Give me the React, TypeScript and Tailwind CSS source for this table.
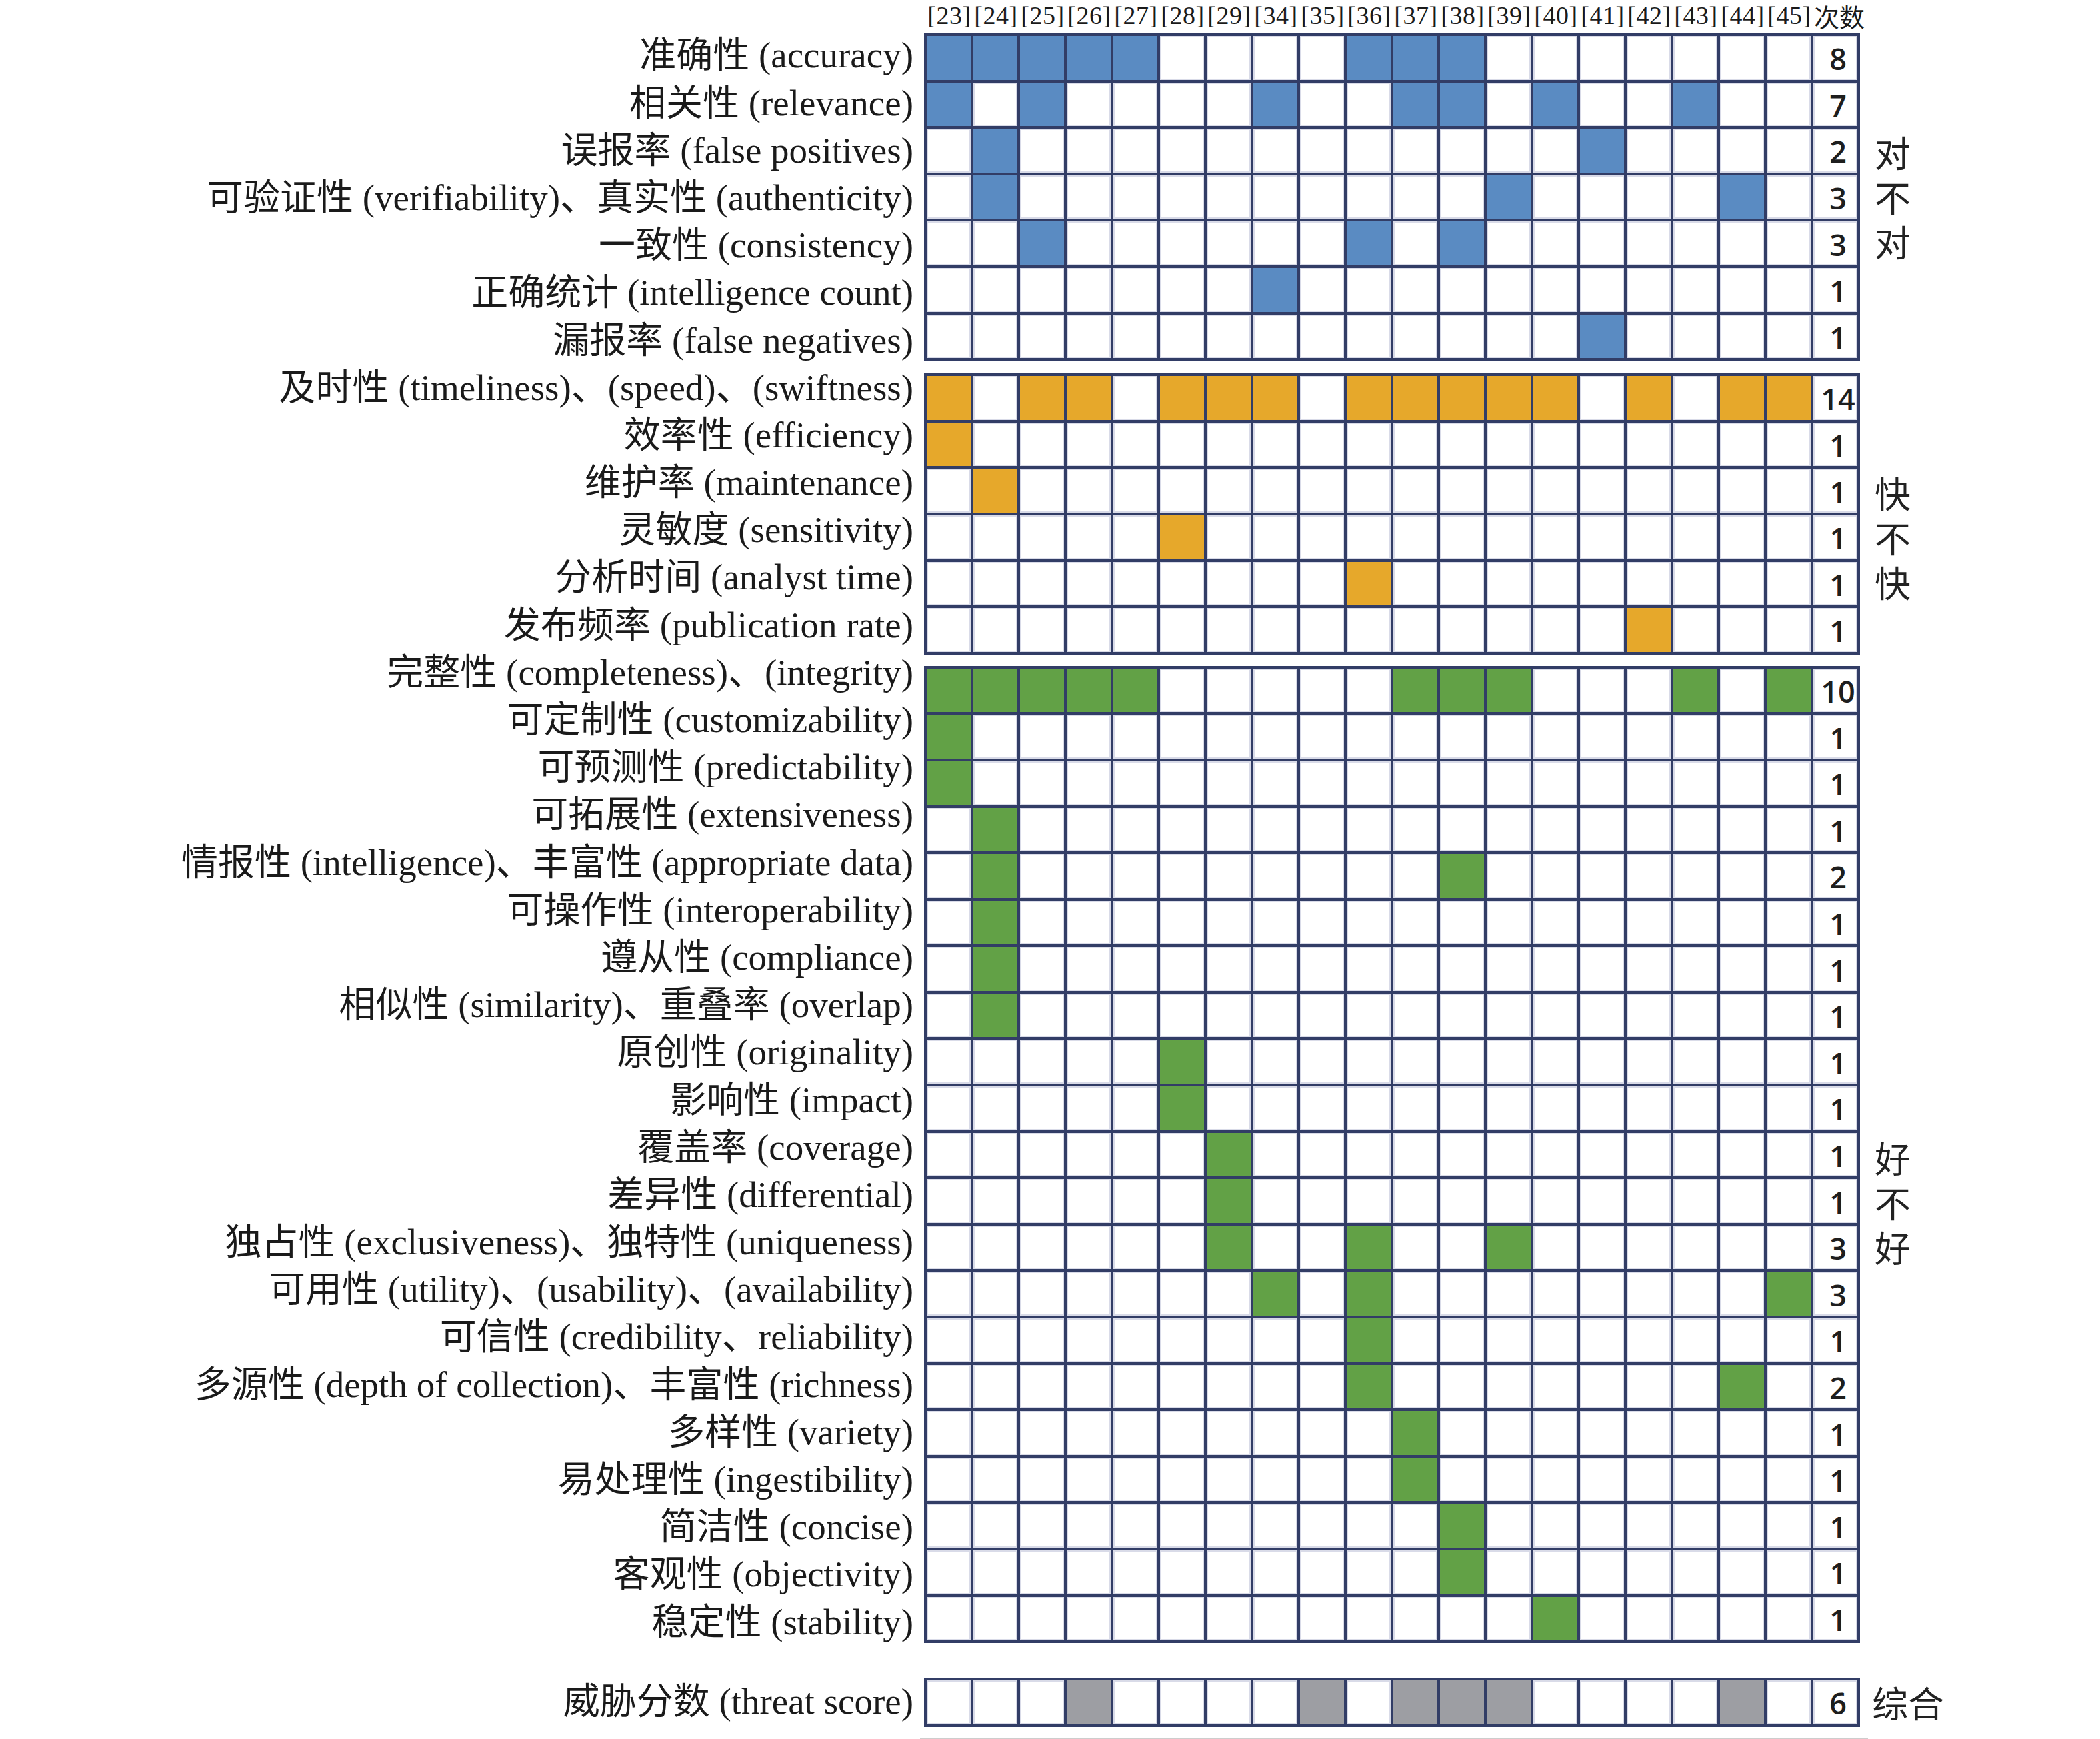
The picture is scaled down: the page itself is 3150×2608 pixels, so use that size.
import React from "react";

type Row = { fill: number[]; count: number };
type Block = { color: string; rows: Row[] };

const refs = ["23", "24", "25", "26", "27", "28", "29", "34", "35", "36", "37", "38", "39", "40", "41", "42", "43", "44", "45"];

const r = (fill: number[], count: number): Row => ({ fill, count });

const blue: Block = {
  color: "bg-[#5a8bc2]",
  rows: [
    r([0, 1, 2, 3, 4, 9, 10, 11], 8),
    r([0, 2, 7, 10, 11, 13, 16], 7),
    r([1, 14], 2),
    r([1, 12, 17], 3),
    r([2, 9, 11], 3),
    r([7], 1),
    r([14], 1),
  ],
};

const orange: Block = {
  color: "bg-[#e6a82b]",
  rows: [
    r([0, 2, 3, 5, 6, 7, 9, 10, 11, 12, 13, 15, 17, 18], 14),
    r([0], 1),
    r([1], 1),
    r([5], 1),
    r([9], 1),
    r([15], 1),
  ],
};

const green: Block = {
  color: "bg-[#62a146]",
  rows: [
    r([0, 1, 2, 3, 4, 10, 11, 12, 16, 18], 10),
    r([0], 1),
    r([0], 1),
    r([1], 1),
    r([1, 11], 2),
    r([1], 1),
    r([1], 1),
    r([1], 1),
    r([5], 1),
    r([5], 1),
    r([6], 1),
    r([6], 1),
    r([6, 9, 12], 3),
    r([7, 9, 18], 3),
    r([9], 1),
    r([9, 17], 2),
    r([10], 1),
    r([10], 1),
    r([11], 1),
    r([11], 1),
    r([13], 1),
  ],
};

const threat: Block = {
  color: "bg-[#9d9ea3]",
  rows: [r([3, 8, 10, 11, 12, 17], 6)],
};

const labels = [
  "准确性 (accuracy)",
  "相关性 (relevance)",
  "误报率 (false positives)",
  "可验证性 (verifiability)、真实性 (authenticity)",
  "一致性 (consistency)",
  "正确统计 (intelligence count)",
  "漏报率 (false negatives)",
  "及时性 (timeliness)、(speed)、(swiftness)",
  "效率性 (efficiency)",
  "维护率 (maintenance)",
  "灵敏度 (sensitivity)",
  "分析时间 (analyst time)",
  "发布频率 (publication rate)",
  "完整性 (completeness)、(integrity)",
  "可定制性 (customizability)",
  "可预测性 (predictability)",
  "可拓展性 (extensiveness)",
  "情报性 (intelligence)、丰富性 (appropriate data)",
  "可操作性 (interoperability)",
  "遵从性 (compliance)",
  "相似性 (similarity)、重叠率 (overlap)",
  "原创性 (originality)",
  "影响性 (impact)",
  "覆盖率 (coverage)",
  "差异性 (differential)",
  "独占性 (exclusiveness)、独特性 (uniqueness)",
  "可用性 (utility)、(usability)、(availability)",
  "可信性 (credibility、reliability)",
  "多源性 (depth of collection)、丰富性 (richness)",
  "多样性 (variety)",
  "易处理性 (ingestibility)",
  "简洁性 (concise)",
  "客观性 (objectivity)",
  "稳定性 (stability)",
];

const serif = "font-['Liberation_Serif','Noto_Sans_CJK_SC',serif]";

function Grid({ block }: { block: Block }) {
  return (
    <div className="grid w-fit grid-cols-[repeat(20,66px)] auto-rows-[65.6px] gap-[4px] bg-[#323d66] p-[4px]">
      {block.rows.map((row, ri) => (
        <React.Fragment key={ri}>
          {refs.map((_, ci) =>
            row.fill.includes(ci) ? (
              <div key={ci} className={block.color} />
            ) : (
              <div key={ci} className="bg-white shadow-[inset_0_0_0_2px_#d9dbe8]" />
            )
          )}
          <div className="flex items-center justify-center bg-white pl-[8px] pt-[2px] shadow-[inset_0_0_0_2px_#d9dbe8] font-['Open_Sans',sans-serif] text-[45px] font-semibold leading-none text-[#1e1e1e]">
            {row.count}
          </div>
        </React.Fragment>
      ))}
    </div>
  );
}

function Side({ text, pt }: { text: string; pt: string }) {
  return (
    <div className={`ml-[22px] w-[56px] break-all font-['Noto_Sans_CJK_SC',sans-serif] text-[54px] leading-[67px] text-[#222] ${pt}`}>
      {text}
    </div>
  );
}

export default function App() {
  return (
    <div className="flex h-[2608px] w-[3150px] overflow-hidden bg-white text-[#1a1a1a]">
      {/* label column */}
      <div className={`flex w-[1370px] shrink-0 flex-col items-end pt-[47.4px] ${serif} text-[55px]`}>
        {labels.map((l) => (
          <div key={l} className="h-[71.2px] whitespace-nowrap leading-[71.2px]">
            {l}
          </div>
        ))}
        <div className="h-[48.4px]" />
        <div className="h-[71.2px] whitespace-nowrap leading-[71.2px]">威胁分数 (threat score)</div>
      </div>

      {/* grid column */}
      <div className="ml-[16px] flex flex-col">
        <div className="flex h-[50px] items-start px-[3px] pt-[2px]">
          {refs.map((x) => (
            <div key={x} className={`w-[70px] text-center ${serif} text-[38px] leading-[42px] tracking-[0.5px]`}>
              [{x}]
            </div>
          ))}
          <div className="w-[90px] whitespace-nowrap pl-[2px] pt-[2px] font-['Noto_Sans_CJK_SC',sans-serif] text-[38px] leading-[40px]">
            次数
          </div>
        </div>

        <div className="flex">
          <Grid block={blue} />
          <Side text="对不对" pt="pt-[143.5px]" />
        </div>

        <div className="mt-[19px] flex">
          <Grid block={orange} />
          <Side text="快不快" pt="pt-[144.5px]" />
        </div>

        <div className="mt-[17px] flex">
          <Grid block={green} />
          <Side text="好不好" pt="pt-[703.5px]" />
        </div>

        <div className="mt-[52px] flex items-center">
          <Grid block={threat} />
          <div className="ml-[18px] whitespace-nowrap font-['Noto_Sans_CJK_SC',sans-serif] text-[54px] leading-[67px] text-[#222]">
            综合
          </div>
        </div>

        <div className="ml-[-6px] mt-[16px] h-[2px] w-[1422px] bg-[#cdcdcd]" />
      </div>
    </div>
  );
}
